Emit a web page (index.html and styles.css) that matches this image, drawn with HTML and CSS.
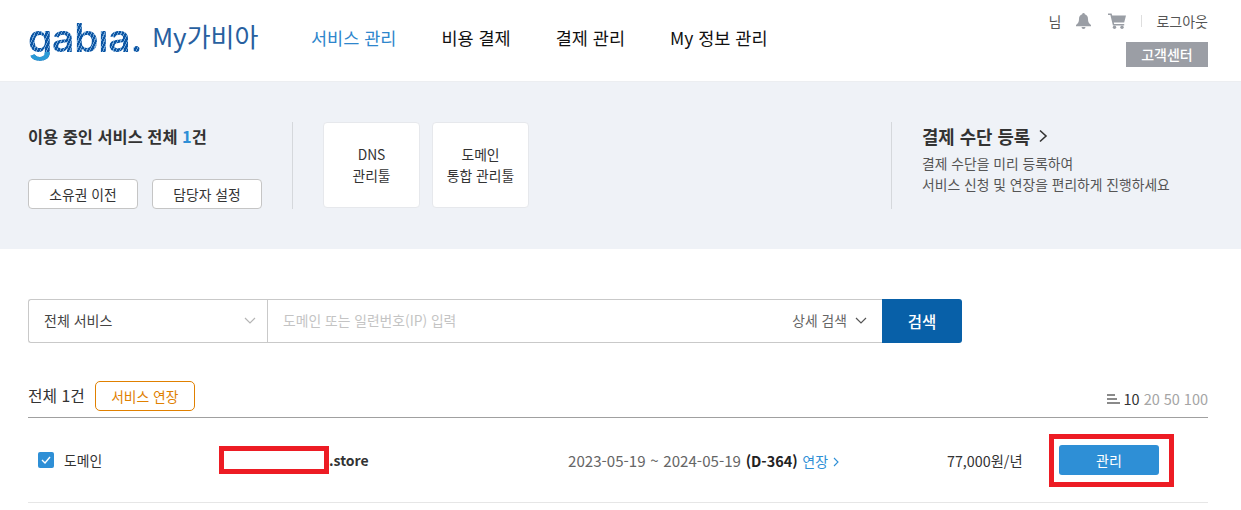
FILE: index.html
```html
<!DOCTYPE html>
<html lang="ko">
<head>
<meta charset="utf-8">
<title>My가비아</title>
<link rel="stylesheet" href="styles.css">
</head>
<body>
<header class="header">
  <div class="brand">
    <span class="logo" aria-label="gabia">gabıa.</span>
    <span class="brand-name">My가비아</span>
  </div>
  <nav class="nav">
    <a class="nav-item is-active">서비스 관리</a>
    <a class="nav-item">비용 결제</a>
    <a class="nav-item">결제 관리</a>
    <a class="nav-item">My 정보 관리</a>
  </nav>
  <div class="util">
    <div class="util-top">
      <span>님</span>
      <svg class="icon-bell" width="15" height="16" viewBox="0 0 15 16"><path fill="#9a9ea5" d="M7.500 0a1.300 1.300 0 0 1 1.300 1.300c2.200.6 3.200 2.500 3.200 4.700 0 2.800.8 4.500 3 6v1.300H0V12c2.200-1.500 3-3.200 3-6 0-2.200 1-4.100 3.200-4.700A1.300 1.300 0 0 1 7.500 0zM5.500 14h4a2 2 0 0 1-4 0z"/></svg>
      <svg class="icon-cart" width="18" height="16" viewBox="0 0 18 16"><path fill="#9a9ea5" d="M0 .5h3.600l.6 2H18l-1.800 7H5.800l.4 1.500h10v1.500H4.900L2.400 2H0z"/><circle cx="6.500" cy="14.300" r="1.700" fill="#9a9ea5"/><circle cx="14" cy="14.300" r="1.700" fill="#9a9ea5"/></svg>
      <span class="util-sep"></span>
      <span>로그아웃</span>
    </div>
    <a class="support">고객센터</a>
  </div>
</header>

<section class="hero">
  <div class="hero-summary">
    <h2 class="hero-title">이용 중인 서비스 전체 <em>1</em>건</h2>
    <div class="hero-actions">
      <button class="btn-outline">소유권 이전</button>
      <button class="btn-outline">담당자 설정</button>
    </div>
  </div>
  <div class="hero-tools">
    <a class="tool-card">DNS<br>관리툴</a>
    <a class="tool-card">도메인<br>통합 관리툴</a>
  </div>
  <div class="hero-pay">
    <h3 class="pay-title">결제 수단 등록
      <svg width="10" height="14" viewBox="0 0 10 14"><path fill="none" stroke="#333" stroke-width="1.600" d="M2 1.500 8 7l-6 5.500"/></svg>
    </h3>
    <p class="pay-text">결제 수단을 미리 등록하여<br>서비스 신청 및 연장을 편리하게 진행하세요</p>
  </div>
</section>

<main class="content">
  <form class="search">
    <div class="search-select">
      <span>전체 서비스</span>
      <svg width="12" height="7" viewBox="0 0 12 7"><path fill="none" stroke="#b5b5b5" stroke-width="1.200" d="M1 1l5 5 5-5"/></svg>
    </div>
    <div class="search-input">
      <span class="placeholder">도메인 또는 일련번호(IP) 입력</span>
      <span class="detail">상세 검색
        <svg width="12" height="7" viewBox="0 0 12 7"><path fill="none" stroke="#555" stroke-width="1.200" d="M1 1l5 5 5-5"/></svg>
      </span>
    </div>
    <button class="search-btn" type="button">검색</button>
  </form>

  <div class="list-head">
    <div class="list-total">
      <span>전체 1건</span>
      <button class="btn-renew">서비스 연장</button>
    </div>
    <div class="page-size">
      <svg width="13" height="10" viewBox="0 0 13 10"><path fill="#8a8a8a" d="M0 0h8v2H0zM0 4h10v2H0zM0 8h13v2H0z"/></svg>
      <b>10</b><span>20</span><span>50</span><span>100</span>
    </div>
  </div>

  <div class="row">
    <div class="cell-type">
      <span class="check"><svg width="10" height="8" viewBox="0 0 10 8"><path fill="none" stroke="#fff" stroke-width="1.400" d="M1 4l3 3 5-6"/></svg></span>
      <span>도메인</span>
    </div>
    <div class="cell-domain"><span class="redact"></span><b>.store</b></div>
    <div class="cell-date">2023-05-19 ~ 2024-05-19 <b>(D-364)</b> <a>연장 <svg width="6" height="10" viewBox="0 0 6 10"><path fill="none" stroke="#2e8fd6" stroke-width="1.100" d="M1 1l4 4-4 4"/></svg></a></div>
    <div class="cell-price">77,000원/년</div>
    <div class="cell-manage"><button class="btn-manage">관리</button></div>
  </div>
</main>
</body>
</html>
```
FILE: styles.css
```css
* { box-sizing: border-box; }
html, body { margin: 0; padding: 0; }
body {
  width: 1241px;
  height: 510px;
  overflow: hidden;
  background: #fff;
  color: #333;
  font-family: "Noto Sans CJK KR", "Noto Sans", sans-serif;
  font-size: 14px;
}
button { font-family: inherit; cursor: pointer; }
h2, h3, p { margin: 0; }
em { font-style: normal; }

.header {
  height: 82px;
  padding: 0 33px 0 28px;
  display: flex;
  border-bottom: 1px solid #eceef1;
}
.brand { display: flex; align-items: flex-start; width: 283px; padding-top: 14px; }
.logo {
  width: 116px;
  font-family: "Inter", sans-serif;
  font-size: 39px;
  font-weight: 600;
  line-height: 48px;
  letter-spacing: -0.300px;
  background: linear-gradient(180deg, transparent 0 38px, #2a9ad6 38px), repeating-linear-gradient(115deg, #0c55a3 0 2px, #6da3d6 2px 3px);
  -webkit-background-clip: text;
  background-clip: text;
  color: transparent;
}
.brand-name {
  margin: 4px 0 0 8px;
  font-size: 26px;
  line-height: 36px;
  color: #28609f;
  white-space: nowrap;
}
.nav { display: flex; gap: 45px; padding-top: 26px; }
.nav-item { font-size: 17.500px; line-height: 24px; color: #111; white-space: nowrap; }
.nav-item.is-active { color: #2e86cc; }
.util { margin-left: auto; display: flex; flex-direction: column; align-items: flex-end; padding-top: 12px; }
.util-top { display: flex; align-items: center; height: 18px; font-size: 14px; color: #555; }
.icon-bell { margin-left: 15px; }
.icon-cart { margin-left: 17px; }
.util-sep { width: 1px; height: 12px; background: #dedede; margin: 0 14px 0 15px; }
.support {
  margin-top: 12px;
  width: 82px;
  height: 25px;
  background: #9b9ea5;
  color: #fff;
  font-size: 14px;
  font-weight: 500;
  line-height: 25px;
  text-align: center;
}

.hero {
  height: 167px;
  background: #eff2f7;
  padding: 40px 33px 0 28px;
  display: flex;
}
.hero-summary {
  width: 265px;
  height: 87px;
  border-right: 1px solid #d5d8dc;
  display: flex;
  flex-direction: column;
  justify-content: space-between;
}
.hero-title { font-size: 16.400px; font-weight: 700; line-height: 28px; margin-top: 0; color: #333; }
.hero-title em { color: #2e8fd6; }
.hero-actions { display: flex; gap: 14px; }
.btn-outline {
  width: 110px;
  height: 30px;
  padding: 0;
  background: #fff;
  border: 1px solid #c5c5c5;
  border-radius: 4px;
  color: #333;
  font-size: 13.800px;
}
.hero-tools { display: flex; gap: 12px; margin-left: 30px; }
.tool-card {
  width: 97px;
  height: 86px;
  background: #fff;
  border: 1px solid #e6e8ec;
  border-radius: 4px;
  display: flex;
  align-items: center;
  justify-content: center;
  text-align: center;
  font-size: 13.800px;
  line-height: 21px;
  color: #333;
}
.hero-pay {
  margin-left: auto;
  width: 317px;
  height: 87px;
  padding-left: 30px;
  border-left: 1px solid #d5d8dc;
}
.pay-title { font-size: 17.800px; font-weight: 700; line-height: 28px; color: #333; display: flex; align-items: center; gap: 8px; }
.pay-text { margin-top: 3px; font-size: 13.800px; line-height: 21px; color: #555; white-space: nowrap; }

.content { padding: 50px 33px 0 28px; }
.search { display: flex; height: 44px; }
.search-select {
  width: 239px;
  border: 1px solid #c9c9c9;
  border-right: 0;
  border-radius: 3px 0 0 3px;
  padding: 0 11px 2px 15px;
  display: flex;
  align-items: center;
  justify-content: space-between;
  font-size: 14px;
  color: #444;
}
.search-input {
  width: 615px;
  border: 1px solid #c9c9c9;
  border-right: 0;
  padding: 0 15px 2px;
  display: flex;
  align-items: center;
  justify-content: space-between;
  font-size: 13.800px;
}
.placeholder { color: #c4c4c4; }
.detail { display: flex; align-items: center; gap: 8px; color: #666; }
.search-btn {
  width: 80px;
  border: 0;
  border-radius: 0 3px 3px 0;
  background: #0860a8;
  color: #fff;
  font-size: 15.500px;
  font-weight: 500;
}

.list-head {
  margin-top: 38px;
  height: 37px;
  border-bottom: 1px solid #a0a0a0;
  display: flex;
  justify-content: space-between;
}
.list-total { display: flex; align-items: flex-start; gap: 10px; font-size: 15.800px; line-height: 30px; color: #333; }
.btn-renew {
  width: 100px;
  height: 30px;
  padding: 0;
  background: #fff;
  border: 1px solid #e08000;
  border-radius: 5px;
  color: #e08000;
  font-size: 13.800px;
}
.page-size { display: flex; align-items: center; gap: 4px; height: 33px; padding-top: 2px; font-size: 14.500px; color: #a5a5a5; }
.page-size svg { margin-right: 0; }
.page-size b { font-weight: 400; color: #333; }

.row {
  height: 85px;
  border-bottom: 1px solid #e6e6e6;
  display: flex;
  align-items: center;
  font-size: 13.800px;
}
.cell-type { width: 191px; padding-left: 10px; display: flex; align-items: center; gap: 10px; color: #333; padding-bottom: 1px; }
.check {
  width: 16px;
  height: 16px;
  background: #2e8fd6;
  border-radius: 2px;
  display: flex;
  align-items: center;
  justify-content: center;
}
.cell-domain { width: 349px; display: flex; align-items: center; font-size: 14px; }
.cell-domain b { font-weight: 700; color: #333; }
.redact { width: 110px; height: 28px; border: 5px solid #ed1c24; background: #fff; }
.cell-date { width: 379px; white-space: nowrap; color: #666; font-size: 15.100px; word-spacing: 0.500px; }
.cell-date b { color: #222; font-weight: 700; font-size: 14.400px; }
.cell-date a { color: #2e8fd6; font-size: 14px; }
.cell-price { width: 102px; font-size: 14.300px; color: #333; white-space: nowrap; }
.cell-manage {
  width: 125px;
  height: 53px;
  border: 5px solid #ed1c24;
  padding-left: 5px;
  display: flex;
  align-items: center;
}
.btn-manage {
  width: 100px;
  height: 30px;
  padding: 0;
  border: 0;
  border-radius: 3px;
  background: #2e8fd6;
  color: #fff;
  font-size: 14px;
}
```
